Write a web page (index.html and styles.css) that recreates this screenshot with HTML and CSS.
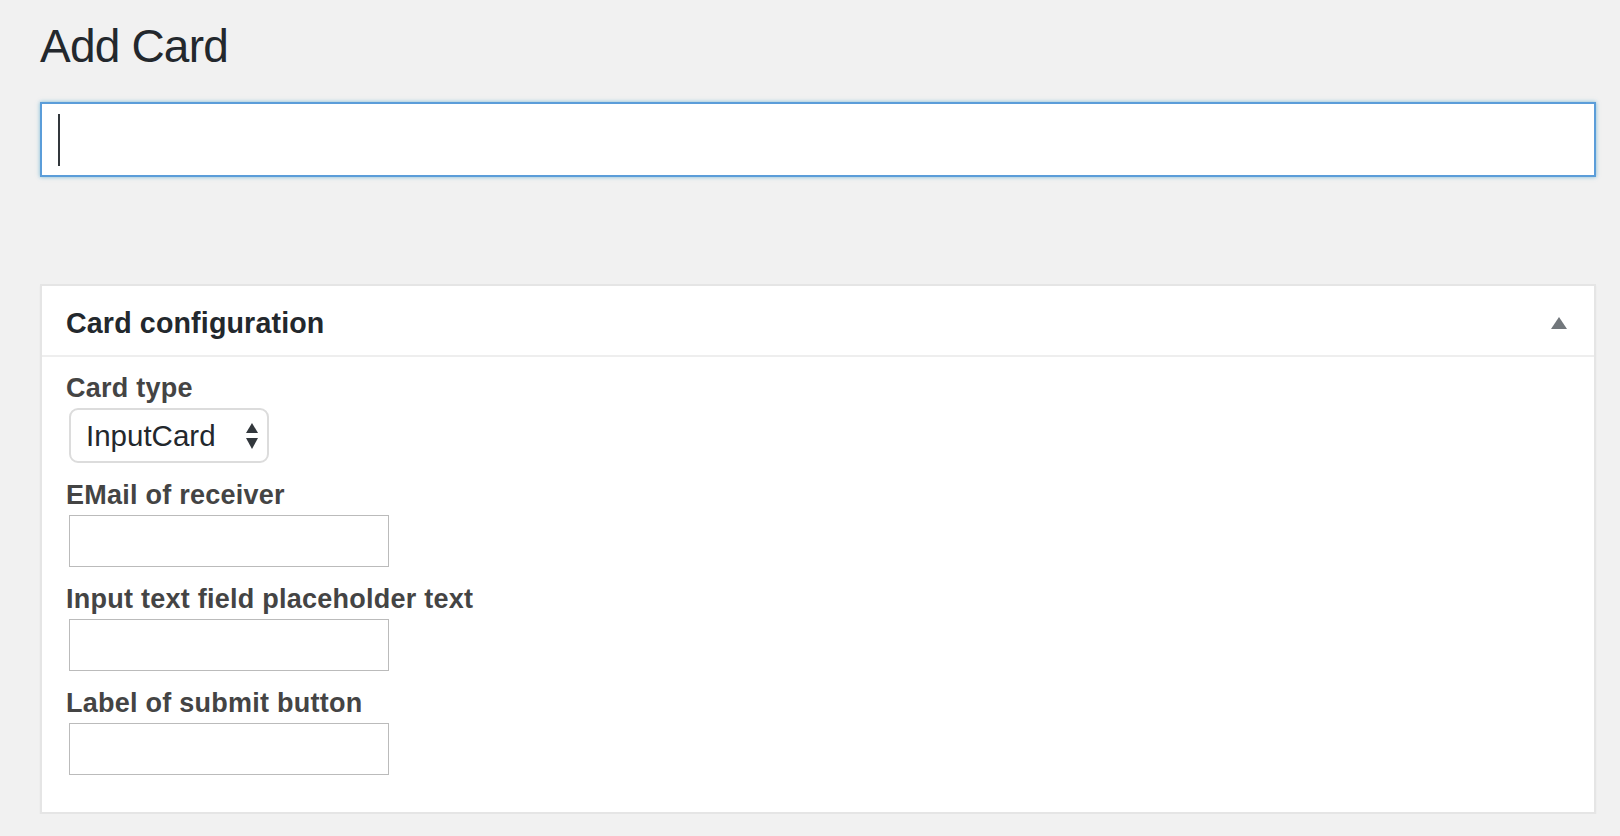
FILE: index.html
```html
<!DOCTYPE html>
<html lang="en">
<head>
<meta charset="utf-8">
<title>Add Card</title>
<link rel="stylesheet" href="styles.css">
</head>
<body>
<div class="wrap">
  <h1 class="page-title">Add Card</h1>
  <div class="title-field"><span class="caret"></span></div>

  <div class="postbox">
    <div class="postbox-header">
      <h2 class="postbox-title">Card configuration</h2>
      <svg class="toggle" width="16" height="12" viewBox="0 0 16 12"><polygon points="8,0 16,12 0,12" fill="#72777c"/></svg>
    </div>
    <div class="postbox-body">
      <div class="field">
        <label class="field-label">Card type</label>
        <div class="select">
          <span class="select-value">InputCard</span>
          <svg class="select-arrows" width="12" height="26" viewBox="0 0 12 26"><polygon points="6,0 12,10 0,10" fill="#32373c"/><polygon points="0,15 12,15 6,26" fill="#32373c"/></svg>
        </div>
      </div>
      <div class="field">
        <label class="field-label">EMail of receiver</label>
        <input class="text-input" type="text">
      </div>
      <div class="field">
        <label class="field-label">Input text field placeholder text</label>
        <input class="text-input" type="text">
      </div>
      <div class="field">
        <label class="field-label">Label of submit button</label>
        <input class="text-input" type="text">
      </div>
    </div>
  </div>
</div>
</body>
</html>
```

FILE: styles.css
```css
html, body {
  margin: 0;
  padding: 0;
  background: #f1f1f1;
  font-family: "Liberation Sans", Arial, sans-serif;
  color: #23282d;
}

.wrap {
  padding: 0 24px 0 40px;
}

.page-title {
  margin: 0;
  padding-top: 19px;
  font-size: 46px;
  line-height: 54px;
  font-weight: 400;
  letter-spacing: -0.8px;
  color: #23282d;
}

.title-field {
  margin-top: 29px;
  height: 75px;
  box-sizing: border-box;
  border: 2px solid #5b9dd9;
  background: #fff;
  box-shadow: 0 0 4px rgba(30, 140, 190, 0.55);
  display: flex;
  align-items: center;
  padding-left: 16px;
}

.caret {
  display: block;
  width: 2px;
  height: 52px;
  background: #32373c;
}

.postbox {
  margin-top: 107px;
  background: #fff;
  border: 2px solid #e5e5e5;
  box-shadow: 0 2px 2px rgba(0, 0, 0, 0.04);
}

.postbox-header {
  display: flex;
  align-items: center;
  justify-content: space-between;
  padding: 21px 27px 16px 24px;
  border-bottom: 2px solid #eeeeee;
}

.postbox-title {
  margin: 0;
  font-size: 28.6px;
  line-height: 32px;
  font-weight: 700;
  letter-spacing: 0.15px;
  color: #23282d;
}

.toggle {
  display: block;
}

.postbox-body {
  padding: 15px 23px 37px 24px;
}

.field {
  display: flex;
  flex-direction: column;
  align-items: flex-start;
}

.field + .field {
  margin-top: 16px;
}

.field-label {
  font-size: 27px;
  line-height: 32px;
  font-weight: 700;
  letter-spacing: 0.25px;
  color: #444444;
}

.select {
  margin: 4px 0 0 3px;
  width: 200px;
  height: 55px;
  box-sizing: border-box;
  border: 2px solid #dcdcdc;
  border-radius: 9px;
  background: #fff;
  display: flex;
  align-items: center;
  justify-content: space-between;
  padding: 0 9px 0 15px;
}

.select-value {
  font-size: 29.5px;
  line-height: 32px;
  color: #23282d;
}

.select-arrows {
  display: block;
}

.text-input {
  margin: 4px 0 0 3px;
  width: 320px;
  height: 52px;
  box-sizing: border-box;
  border: 1px solid #bbbbbb;
  background: #fff;
  padding: 0 8px;
  font-family: "Liberation Sans", Arial, sans-serif;
  font-size: 27px;
  outline: none;
}
```
